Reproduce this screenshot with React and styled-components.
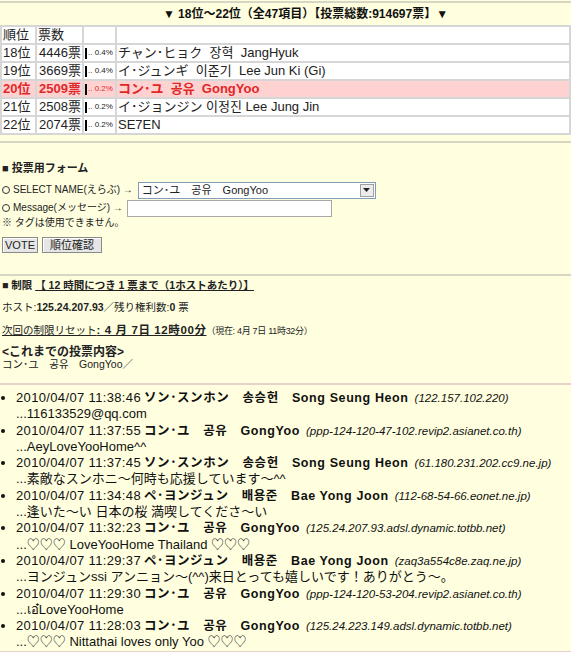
import React from "react"
import styled, { createGlobalStyle } from "styled-components"

const FONT = `"Liberation Sans", "Noto Sans CJK JP", sans-serif`

const GlobalStyle = createGlobalStyle`
    body {
        margin: 0;
        background: #ffffe0;
        color: #222;
        font-family: ${FONT};
    }
`

const Page = styled.div`
    width: 571px;
    padding-top: 1px;
`

const Divider = styled.div`
    height: 0;
    border-top: 2px solid ${p => (p.$pink ? "#e6d2c6" : "#d6d6c4")};
    margin-top: ${p => p.$top || 0}px;
`

const TitleBar = styled.div`
    text-align: center;
    padding-left: 40px;
    font: bold 12px/22px ${FONT};
    color: #111;
`

const RankTable = styled.table`
    width: 100%;
    border-collapse: separate;
    border-spacing: 2px;
    background: #d6d6d6;
    font: 13px/12px ${FONT};
`

const Row = styled.tr`
    color: ${p => (p.$hot ? "#e02828" : "#222")};
    font-weight: ${p => (p.$hot ? "bold" : "normal")};
    & > td {
        background: ${p => (p.$hot ? "#ffd2d2" : "#fff")};
    }
`

const Cell = styled.td`
    height: 16px;
    padding: 0 1px;
    width: ${p => (p.$w ? `${p.$w}px` : "auto")};
    text-align: ${p => p.$align || "left"};
    white-space: pre;
    vertical-align: middle;
`

const Bar = styled.span`
    display: inline-block;
    width: 2px;
    height: 11px;
    background: #000;
    vertical-align: middle;
`

const Pct = styled.span`
    font-size: 8px;
    font-weight: normal;
    margin-left: 1px;
    vertical-align: middle;
`

const FormSection = styled.div`
    padding-left: 2px;
    font: 10px/14px ${FONT};
`

const Heading = styled.div`
    font-weight: bold;
    font-size: 11px;
    line-height: 14px;
    margin-top: ${p => p.$top || 0}px;
`

const FieldRow = styled.div`
    display: flex;
    align-items: center;
    gap: 4px;
    height: 18px;
    margin-top: ${p => p.$top || 0}px;
`

const Radio = styled.span`
    display: inline-block;
    box-sizing: border-box;
    width: 8px;
    height: 8px;
    border: 1px solid #333;
    border-radius: 50%;
    margin-right: 3px;
    vertical-align: -1px;
`

const SelectBox = styled.div`
    box-sizing: border-box;
    width: 238px;
    height: 17px;
    margin-left: 1px;
    display: flex;
    align-items: center;
    justify-content: space-between;
    border: 1px solid #7f9db9;
    background: #fff;
    padding-left: 3px;
    font-size: 11px;
`

const DropButton = styled.span`
    box-sizing: border-box;
    width: 14px;
    height: 13px;
    margin-right: 1px;
    display: flex;
    align-items: center;
    justify-content: center;
    background: #ececec;
    border: 1px solid #a0a0a0;
`

const TextInput = styled.div`
    box-sizing: border-box;
    width: 205px;
    height: 17px;
    border: 1px solid #a8a8a8;
    background: #fff;
`

const Note = styled.div`
    line-height: 12px;
`

const ButtonRow = styled.div`
    display: flex;
    gap: 4px;
    margin-top: 8px;
`

const Button = styled.div`
    box-sizing: border-box;
    height: 16px;
    width: ${p => p.$w}px;
    display: flex;
    align-items: center;
    justify-content: center;
    background: #e6e6e6;
    border: 1px solid #8a8a8a;
    box-shadow: inset 1px 1px 0 #fff;
    font-size: 11px;
    color: #222;
`

const LimitSection = styled.div`
    padding-left: 2px;
    font: 10.5px/14px ${FONT};
`

const Line = styled.div`
    margin-top: ${p => p.$top || 0}px;
    height: ${p => p.$lh || 14}px;
    line-height: ${p => p.$lh || 14}px;
    white-space: nowrap;
`

const B = styled.b`
    font-weight: bold;
`

const U = styled.span`
    text-decoration: underline;
    font-weight: ${p => (p.$bold ? "bold" : "normal")};
    font-size: ${p => (p.$wide ? "11.5px" : "inherit")};
    letter-spacing: ${p => (p.$wide ? "0.6px" : "0")};
`

const Small = styled.span`
    font-size: 9px;
    letter-spacing: -0.3px;
`

const HistoryTitle = styled.div`
    margin-top: 9px;
    height: 12px;
    font-weight: bold;
    font-size: 12px;
    line-height: 12px;
`

const LogList = styled.ul`
    margin: 5px 0 0;
    padding: 0 0 0 16px;
    list-style: disc;
    font: 13px/16.3px ${FONT};
    color: #111;
`

const LogItem = styled.li`
    white-space: nowrap;
`

const LogLine = styled.div`
    height: 16.3px;
    line-height: 16.3px;
`

const Time = styled.span`
    letter-spacing: 0.35px;
`

const Who = styled.span`
    font-weight: bold;
    font-size: 12.5px;
    letter-spacing: 0.6px;
    margin-left: 3px;
`

const Host = styled.span`
    font-style: italic;
    font-size: 11.5px;
    margin-left: 6px;
`

const ranks = [
    { rank: "18位", votes: "4446票", pct: "0.4%", name: "チャン･ヒョク  장혁  JangHyuk" },
    { rank: "19位", votes: "3669票", pct: "0.4%", name: "イ･ジュンギ  이준기  Lee Jun Ki (Gi)" },
    { rank: "20位", votes: "2509票", pct: "0.2%", name: "コン･ユ  공유  GongYoo", hot: true },
    { rank: "21位", votes: "2508票", pct: "0.2%", name: "イ･ジョンジン 이정진 Lee Jung Jin" },
    { rank: "22位", votes: "2074票", pct: "0.2%", name: "SE7EN" },
]

const SSH = "ソン･スンホン　송승헌　Song Seung Heon"
const GY = "コン･ユ　공유　GongYoo"
const BYJ = "ペ･ヨンジュン　배용준　Bae Yong Joon"

const logs = [
    { time: "2010/04/07 11:38:46", who: SSH, host: "(122.157.102.220)", msg: "...116133529@qq.com" },
    { time: "2010/04/07 11:37:55", who: GY, host: "(ppp-124-120-47-102.revip2.asianet.co.th)", msg: "...AeyLoveYooHome^^" },
    { time: "2010/04/07 11:37:45", who: SSH, host: "(61.180.231.202.cc9.ne.jp)", msg: "...素敵なスンホニ～何時も応援しています～^^" },
    { time: "2010/04/07 11:34:48", who: BYJ, host: "(112-68-54-66.eonet.ne.jp)", msg: "...逢いた～い 日本の桜 満喫してくださ～い" },
    { time: "2010/04/07 11:32:23", who: GY, host: "(125.24.207.93.adsl.dynamic.totbb.net)", msg: "...♡♡♡ LoveYooHome Thailand ♡♡♡" },
    { time: "2010/04/07 11:29:37", who: BYJ, host: "(zaq3a554c8e.zaq.ne.jp)", msg: "...ヨンジュンssi アンニョン～(^^)来日とっても嬉しいです！ありがとう～。" },
    { time: "2010/04/07 11:29:30", who: GY, host: "(ppp-124-120-53-204.revip2.asianet.co.th)", msg: "...เอ๋LoveYooHome" },
    { time: "2010/04/07 11:28:03", who: GY, host: "(125.24.223.149.adsl.dynamic.totbb.net)", msg: "...♡♡♡ Nittathai loves only Yoo ♡♡♡" },
]

const App = () => (
    <Page>
        <GlobalStyle />
        <Divider />
        <TitleBar>▼ 18位～22位（全47項目）【投票総数:914697票】▼</TitleBar>
        <RankTable>
            <tbody>
                <Row>
                    <Cell $w={31}>順位</Cell>
                    <Cell $w={43}>票数</Cell>
                    <Cell $w={29}></Cell>
                    <Cell></Cell>
                </Row>
                {ranks.map(r => (
                    <Row key={r.rank} $hot={r.hot}>
                        <Cell>{r.rank}</Cell>
                        <Cell $align="right">{r.votes}</Cell>
                        <Cell><Bar /><Pct>.. {r.pct}</Pct></Cell>
                        <Cell>{r.name}</Cell>
                    </Row>
                ))}
            </tbody>
        </RankTable>

        <Divider $top={6} />
        <FormSection>
            <Heading $top={18}>■ 投票用フォーム</Heading>
            <FieldRow $top={6}>
                <span><Radio />SELECT NAME(えらぶ) →</span>
                <SelectBox>
                    <span>コン･ユ　공유　GongYoo</span>
                    <DropButton>
                        <svg width="7" height="4" viewBox="0 0 7 4"><path d="M0 0h7L3.5 4z" fill="#222" /></svg>
                    </DropButton>
                </SelectBox>
            </FieldRow>
            <FieldRow>
                <span><Radio />Message(メッセージ) →</span>
                <TextInput />
            </FieldRow>
            <Note>※ タグは使用できません。</Note>
            <ButtonRow>
                <Button $w={36}>VOTE</Button>
                <Button $w={60}>順位確認</Button>
            </ButtonRow>
        </FormSection>

        <Divider $top={21} />
        <LimitSection>
            <Line $top={2}>
                <B>■ 制限</B> <U $bold>【 12 時間につき 1 票まで（1ホストあたり）】</U>
            </Line>
            <Line $top={8}>
                ホスト:<B>125.24.207.93</B>／残り権利数:<B>0</B> 票
            </Line>
            <Line $top={9}>
                <U>次回の制限リセット</U><U $bold $wide>: 4 月 7日 12時00分</U><Small>（現在: 4月 7日 11時32分）</Small>
            </Line>
            <HistoryTitle>&lt;これまでの投票内容&gt;</HistoryTitle>
            <Line $lh={12}>コン･ユ　공유　GongYoo／</Line>
        </LimitSection>

        <Divider $pink $top={13} />
        <LogList>
            {logs.map(l => (
                <LogItem key={l.time}>
                    <LogLine>
                        <Time>{l.time}</Time><Who>{l.who}</Who><Host>{l.host}</Host>
                    </LogLine>
                    <LogLine>{l.msg}</LogLine>
                </LogItem>
            ))}
        </LogList>
        <Divider $pink />
    </Page>
)

export default App
